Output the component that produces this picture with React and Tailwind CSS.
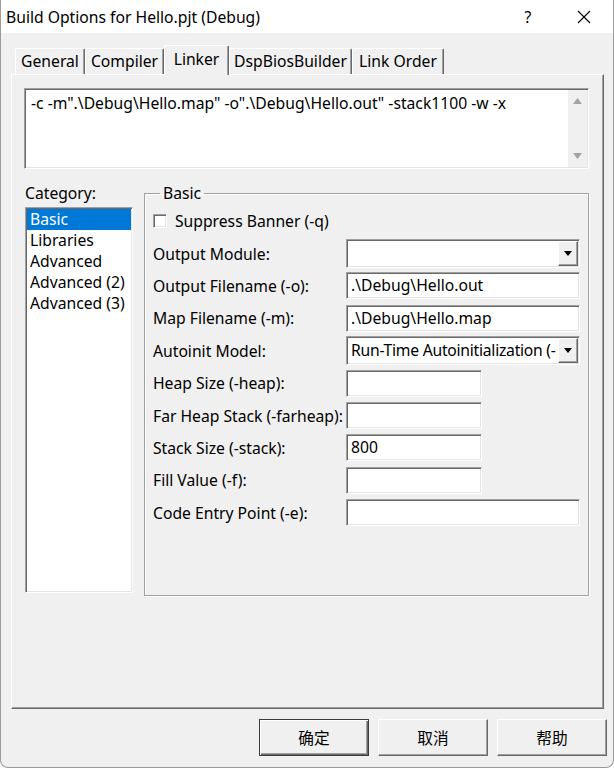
import React from "react";

const sunken =
  "border border-t-[#a0a0a0] border-l-[#a0a0a0] border-b-white border-r-white shadow-[inset_1px_1px_0_#696969,inset_-1px_-1px_0_#e3e3e3]";
const raised =
  "border border-t-white border-l-white border-b-[#696969] border-r-[#696969] shadow-[inset_-1px_-1px_0_#a0a0a0]";

function Tab({ label, width, active }) {
  if (active) {
    return (
      <div
        className={`${width} h-[30px] -mb-px relative z-10 bg-[#f0f0f0] border-t border-l border-white border-r border-r-[#696969] rounded-t-[2px] shadow-[inset_-1px_0_0_#a0a0a0] flex items-start justify-center pt-[3px]`}
      >
        {label}
      </div>
    );
  }
  return (
    <div
      className={`${width} h-[26px] border-t border-l border-white border-r border-r-[#696969] rounded-t-[2px] shadow-[inset_-1px_0_0_#a0a0a0] flex items-start justify-center pt-[2px]`}
    >
      {label}
    </div>
  );
}

function DropButton() {
  return (
    <div
      className={`w-[20px] h-full shrink-0 bg-[#f0f0f0] ${raised} flex items-center justify-center`}
    >
      <svg width="8" height="5" viewBox="0 0 8 5">
        <path d="M0 0h8L4 5z" fill="#000" />
      </svg>
    </div>
  );
}

function Combo({ value = "", tight }) {
  return (
    <div className={`w-[234px] h-[29px] bg-white ${sunken} flex items-stretch p-[1px]`}>
      <div
        className={`flex-1 min-w-0 overflow-hidden whitespace-nowrap pl-[3px] leading-[25px] ${
          tight ? "tracking-[-0.25px]" : ""
        }`}
      >
        {value}
      </div>
      <DropButton />
    </div>
  );
}

function Edit({ value = "", wide }) {
  return (
    <div
      className={`${wide ? "w-[234px]" : "w-[136px]"} h-[27px] bg-white ${sunken} pl-[4px] leading-[25px] whitespace-nowrap overflow-hidden`}
    >
      {value}
    </div>
  );
}

function Row({ label, children }) {
  return (
    <div className="h-[32.4px] flex items-center">
      <div className="w-[193px] whitespace-nowrap">{label}</div>
      {children}
    </div>
  );
}

function DlgButton({ label, isDefault }) {
  return (
    <div
      className={`w-[110px] h-[37px] bg-[#f0f0f0] flex items-center justify-center ${
        isDefault
          ? "border border-[#3c3c3c] shadow-[inset_1px_1px_0_#fff,inset_-1px_-1px_0_#696969,inset_-2px_-2px_0_#a0a0a0]"
          : raised
      }`}
    >
      {label}
    </div>
  );
}

export default function App() {
  const categories = ["Basic", "Libraries", "Advanced", "Advanced (2)", "Advanced (3)"];

  return (
    <div className="w-[614px] h-[768px] bg-[#f0f0f0] text-black text-[15.7px] leading-[20px] [font-family:'Noto_Sans','Noto_Sans_CJK_SC',sans-serif] border-x border-b border-[#9b9b9b] rounded-b-[8px] overflow-hidden flex flex-col">
      {/* title bar */}
      <div className="h-[33px] bg-white flex items-center shrink-0">
        <div className="pl-[5px]">Build Options for Hello.pjt (Debug)</div>
        <div className="ml-auto flex h-full pr-[1px]">
          <div className="w-[56px] h-full flex items-center justify-center">?</div>
          <div className="w-[56px] h-full flex items-center justify-center">
            <svg width="14" height="14" viewBox="0 0 14 14">
              <path d="M1 1L13 13M13 1L1 13" stroke="#000" strokeWidth="1.1" fill="none" />
            </svg>
          </div>
        </div>
      </div>

      <div className="ml-[10px] w-[593px] flex flex-col">
        {/* tabs */}
        <div className="mt-[12px] h-[29px] pl-[4px] flex items-end">
          <Tab label="General" width="w-[70px]" />
          <Tab label="Compiler" width="w-[79px]" />
          <Tab label="Linker" width="w-[65px]" active />
          <Tab label="DspBiosBuilder" width="w-[123px]" />
          <Tab label="Link Order" width="w-[92px]" />
        </div>

        {/* panel */}
        <div className="h-[635px] border border-t-white border-l-white border-r-[#696969] border-b-[#696969] shadow-[inset_-1px_-1px_0_#a0a0a0] pl-[12px] pt-[13px]">
          <div className={`w-[565px] h-[81px] bg-white ${sunken} flex`}>
            <div className="flex-1 pl-[6px] pt-[4px] whitespace-nowrap">
              -c -m".\Debug\Hello.map" -o".\Debug\Hello.out" -stack1100 -w -x
            </div>
            <div className="w-[19px] mr-[1px] my-[1px] bg-[#f0f0f0] flex flex-col items-center justify-between py-[8px]">
              <svg width="9" height="6" viewBox="0 0 9 6">
                <path d="M0 6L4.5 0L9 6z" fill="#a3a3a3" />
              </svg>
              <svg width="9" height="6" viewBox="0 0 9 6">
                <path d="M0 0h9L4.5 6z" fill="#a3a3a3" />
              </svg>
            </div>
          </div>

          <div className="mt-[14px] flex">
            {/* category */}
            <div className="ml-[1px] w-[108px]">
              <div>Category:</div>
              <div className={`mt-[4px] h-[386px] bg-white ${sunken} p-[1px]`}>
                {categories.map((c, i) => (
                  <div
                    key={c}
                    className={`h-[21px] leading-[21px] pl-[3px] whitespace-nowrap ${
                      i === 0 ? "bg-[#0078d7] text-white" : ""
                    }`}
                  >
                    {c}
                  </div>
                ))}
              </div>
            </div>

            {/* group box */}
            <fieldset className="ml-[11px] w-[445px] h-[413px] border border-[#a0a0a0] shadow-[inset_1px_1px_0_#fff,1px_1px_0_#fff] pl-[8px] pt-[2px]">
              <legend className="ml-[7px] px-[3px] leading-[20px]">Basic</legend>
              <div className="h-[32.4px] flex items-center">
                <div className={`w-[14px] h-[14px] bg-white ${sunken}`} />
                <div className="ml-[8px]">Suppress Banner (-q)</div>
              </div>
              <Row label="Output Module:">
                <Combo />
              </Row>
              <Row label="Output Filename (-o):">
                <Edit value=".\Debug\Hello.out" wide />
              </Row>
              <Row label="Map Filename (-m):">
                <Edit value=".\Debug\Hello.map" wide />
              </Row>
              <Row label="Autoinit Model:">
                <Combo value="Run-Time Autoinitialization (-" tight />
              </Row>
              <Row label="Heap Size (-heap):">
                <Edit />
              </Row>
              <Row label="Far Heap Stack (-farheap):">
                <Edit />
              </Row>
              <Row label="Stack Size (-stack):">
                <Edit value="800" />
              </Row>
              <Row label="Fill Value (-f):">
                <Edit />
              </Row>
              <Row label="Code Entry Point (-e):">
                <Edit wide />
              </Row>
            </fieldset>
          </div>
        </div>
      </div>

      {/* buttons */}
      <div className="mt-[10px] flex justify-end gap-[9px] pr-[6px]">
        <DlgButton label="确定" isDefault />
        <DlgButton label="取消" />
        <DlgButton label="帮助" />
      </div>
    </div>
  );
}
